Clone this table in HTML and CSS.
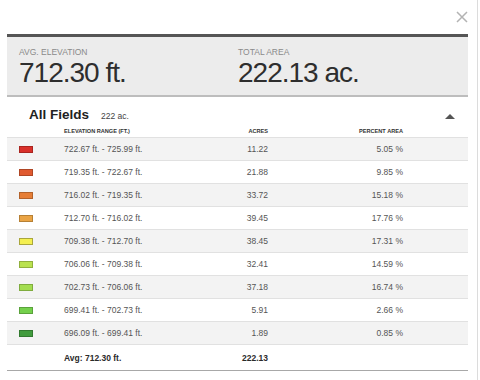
FILE: index.html
```html
<!DOCTYPE html>
<html>
<head>
<meta charset="utf-8">
<link rel="stylesheet" href="styles.css">
</head>
<body>
<div class="modal">
  <div class="topbar">
    <svg class="close" width="12" height="12" viewBox="0 0 12 12"><path d="M1 1 L11 11 M11 1 L1 11" stroke="#b3b3b3" stroke-width="1.5" fill="none"/></svg>
  </div>
  <div class="card">
    <div class="summary">
      <div class="stat">
        <div class="label">AVG. ELEVATION</div>
        <div class="value">712.30 ft.</div>
      </div>
      <div class="stat">
        <div class="label">TOTAL AREA</div>
        <div class="value">222.13 ac.</div>
      </div>
    </div>
    <div class="section-head">
      <span class="title">All Fields</span>
      <span class="sub">222 ac.</span>
      <span class="caret"></span>
    </div>
    <div class="row colhead">
      <span></span>
      <span>ELEVATION RANGE (FT.)</span>
      <span class="num">ACRES</span>
      <span class="num">PERCENT AREA</span>
    </div>
    <div class="row data shade"><span class="cell"><i class="sw c1"></i></span><span>722.67 ft. - 725.99 ft.</span><span class="num">11.22</span><span class="num">5.05 %</span></div>
    <div class="row data"><span class="cell"><i class="sw c2"></i></span><span>719.35 ft. - 722.67 ft.</span><span class="num">21.88</span><span class="num">9.85 %</span></div>
    <div class="row data shade"><span class="cell"><i class="sw c3"></i></span><span>716.02 ft. - 719.35 ft.</span><span class="num">33.72</span><span class="num">15.18 %</span></div>
    <div class="row data"><span class="cell"><i class="sw c4"></i></span><span>712.70 ft. - 716.02 ft.</span><span class="num">39.45</span><span class="num">17.76 %</span></div>
    <div class="row data shade"><span class="cell"><i class="sw c5"></i></span><span>709.38 ft. - 712.70 ft.</span><span class="num">38.45</span><span class="num">17.31 %</span></div>
    <div class="row data"><span class="cell"><i class="sw c6"></i></span><span>706.06 ft. - 709.38 ft.</span><span class="num">32.41</span><span class="num">14.59 %</span></div>
    <div class="row data shade"><span class="cell"><i class="sw c7"></i></span><span>702.73 ft. - 706.06 ft.</span><span class="num">37.18</span><span class="num">16.74 %</span></div>
    <div class="row data"><span class="cell"><i class="sw c8"></i></span><span>699.41 ft. - 702.73 ft.</span><span class="num">5.91</span><span class="num">2.66 %</span></div>
    <div class="row data shade"><span class="cell"><i class="sw c9"></i></span><span>696.09 ft. - 699.41 ft.</span><span class="num">1.89</span><span class="num">0.85 %</span></div>
    <div class="row data total"><span></span><span>Avg: 712.30 ft.</span><span class="num">222.13</span><span></span></div>
  </div>
</div>
</body>
</html>
```
FILE: styles.css
```css
html, body {
  margin: 0;
  padding: 0;
  background: #fff;
}
body {
  font-family: "Liberation Sans", Arial, sans-serif;
  color: #333;
}
.modal {
  width: 461px;
  height: 380px;
  padding: 0 9px 0 7px;
  border-right: 1px solid #dcdcdc;
}
.topbar {
  height: 34px;
  display: flex;
  justify-content: flex-end;
  align-items: flex-start;
}
.close {
  margin-top: 11px;
  display: block;
}
.card {
  display: flex;
  flex-direction: column;
}
.summary {
  display: grid;
  grid-template-columns: 219px 1fr;
  background: #ececec;
  border-top: 3px solid #555;
  border-bottom: 2px solid #bdbdbd;
  padding: 11px 12px 8px;
}
.label {
  font-size: 8.5px;
  line-height: 9px;
  color: #8a8a8a;
}
.value {
  margin-top: 2px;
  font-size: 28px;
  line-height: 28px;
  letter-spacing: -1px;
  color: #2e2e2e;
}
.section-head {
  display: flex;
  align-items: baseline;
  padding: 10px 13px 0 22px;
  height: 16px;
}
.title {
  font-size: 13.5px;
  line-height: 16px;
  font-weight: bold;
  color: #222;
}
.sub {
  font-size: 8.5px;
  margin-left: 12px;
  color: #444;
}
.caret {
  margin-left: auto;
  align-self: center;
  width: 0;
  height: 0;
  border-left: 5px solid transparent;
  border-right: 5px solid transparent;
  border-bottom: 5px solid #555;
  margin-top: 2px;
}
.row {
  display: grid;
  grid-template-columns: 57px 147px 57px 135px 1fr;
  align-items: center;
}
.colhead {
  font-size: 5.6px;
  line-height: 8px;
  font-weight: bold;
  color: #333;
  margin-top: 4px;
  padding-bottom: 2px;
}
.num {
  text-align: right;
}
.data {
  height: 22px;
  border-top: 1px solid #e1e1e1;
  font-size: 8.5px;
  color: #555;
}
.shade {
  background: #f3f3f3;
}
.total {
  height: 25px;
  font-weight: bold;
  color: #2a2a2a;
  border-bottom: 1px solid #a8a8a8;
}
.cell {
  padding-left: 12px;
  display: flex;
  align-items: center;
}
.sw {
  display: block;
  width: 14px;
  height: 7px;
  box-sizing: border-box;
  border: 1px solid rgba(0, 0, 0, 0.22);
}
.c1 { background: #d9302a; }
.c2 { background: #e05a30; }
.c3 { background: #e67e36; }
.c4 { background: #eaa445; }
.c5 { background: #f4ef50; border-color: #a9a63c; }
.c6 { background: #bae24f; }
.c7 { background: #a3dd50; }
.c8 { background: #74d04c; }
.c9 { background: #419b3d; }
```
